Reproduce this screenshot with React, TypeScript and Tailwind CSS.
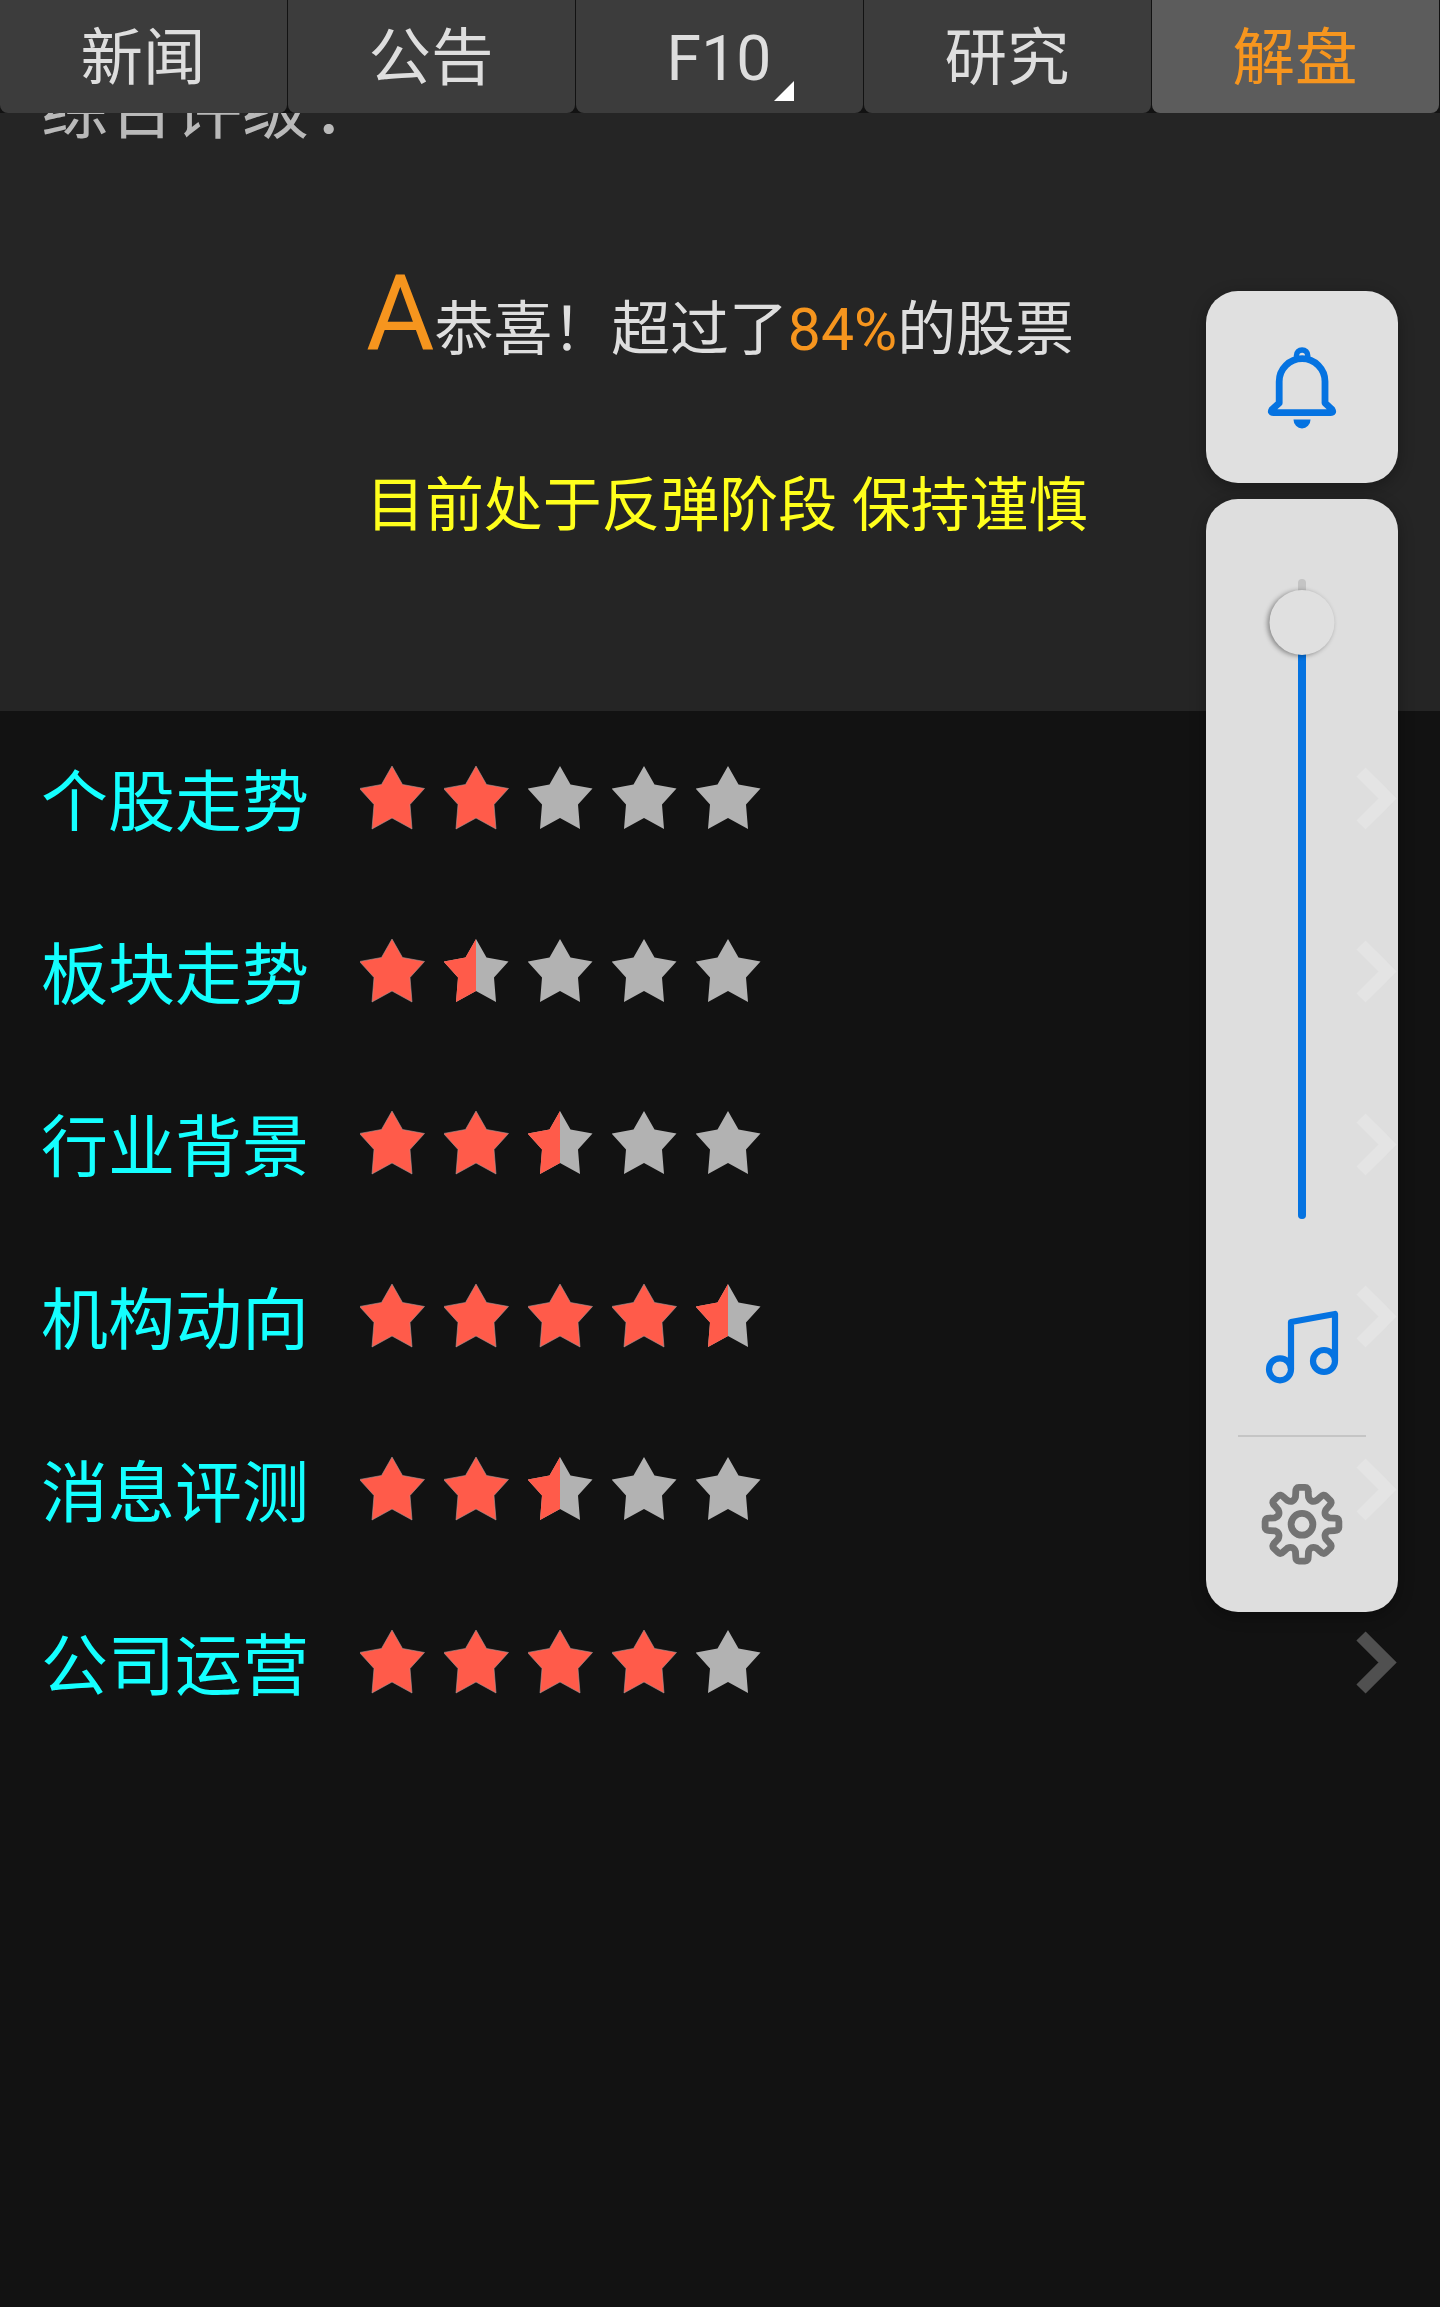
const tabs = ["新闻", "公告", "F10", "研究", "解盘"];

const ratings = [
  { name: "个股走势", score: 2 },
  { name: "板块走势", score: 1.5 },
  { name: "行业背景", score: 2.5 },
  { name: "机构动向", score: 4.5 },
  { name: "消息评测", score: 2.5 },
  { name: "公司运营", score: 4 },
];

const STAR = "32,0 42.500,18.500 64.500,22.500 50,38.500 52,63 32,52 12,63 14,38.500 -0.500,22.500 21.500,18.500";

function Star({ fill }: { fill: number }) {
  return (
    <svg width="65" height="65" viewBox="0 0 65 65" className="shrink-0">
      {fill < 1 && <polygon points={STAR} fill="#b2b2b2" />}
      {fill === 1 && <polygon points={STAR} fill="#ff5b4a" stroke="#aa9999" strokeWidth="0.6" />}
      {fill === 0.5 && <polygon points="32,0 32,52 12,63 14,38.500 -0.500,22.500 21.500,18.500" fill="#ff5b4a" />}
    </svg>
  );
}

function Chevron() {
  return (
    <svg width="42" height="65" viewBox="0 0 42 65" className="shrink-0">
      <path d="M5 6L31.500 32.500L5 59" fill="none" stroke="#505050" strokeWidth="13" />
    </svg>
  );
}

function Bell() {
  return (
    <svg width="104" height="104" viewBox="0 0 104 104" fill="none" stroke="#0573e1" strokeWidth="6.8" strokeLinejoin="round">
      <path d="M29.2 67V45.500a22.900 22.900 0 0 1 45.800 0V67L82 73.500Q84 76.700 80.500 76.700H23.500Q20 76.700 22 73.500Z" />
      <path d="M46.500 22V19.500a5.600 5.600 0 0 1 11.200 0V22" strokeWidth="5.500" />
      <path d="M43.500 83.500H60.500a8.500 9 0 0 1-17 0Z" fill="#0573e1" stroke="none" />
    </svg>
  );
}

function Music() {
  return (
    <svg width="104" height="110" viewBox="0 0 104 110" fill="none" stroke="#0573e1" strokeWidth="6.2" strokeLinejoin="round">
      <circle cx="30" cy="79.300" r="11" />
      <circle cx="74" cy="71" r="11" />
      <path d="M41 79.300V32L85 24V71" />
    </svg>
  );
}

const GEAR = (() => {
  const pts: string[] = [];
  for (let i = 0; i < 8; i++) {
    const base = (i * Math.PI) / 4 - Math.PI / 2;
    const at = (r: number, a: number) =>
      `${(52 + r * Math.cos(base + a)).toFixed(2)} ${(54.3 + r * Math.sin(base + a)).toFixed(2)}`;
    pts.push(`${i === 0 ? "M" : "L"}${at(28, -0.235)}`);
    pts.push(`L${at(33, -0.19)}Q${at(37.5, -0.17)} ${at(37, -0.08)}`);
    pts.push(`L${at(37, 0.08)}Q${at(37.5, 0.17)} ${at(33, 0.19)}`);
    pts.push(`L${at(28, 0.235)}Q${at(22.8, 0.3927)} ${at(28, 0.5504)}`);
  }
  return pts.join("") + "Z";
})();

function Gear() {
  return (
    <svg width="104" height="108" viewBox="0 0 104 108" fill="none" stroke="#737373" strokeWidth="6.8" strokeLinejoin="round">
      <path d={GEAR} />
      <circle cx="52" cy="54.300" r="10.900" />
    </svg>
  );
}

export default function App() {
  return (
    <main className="relative h-[2307px] w-[1440px] overflow-hidden bg-[#121212] font-[Roboto,'Noto_Sans_CJK_SC',sans-serif]">
      <nav className="relative z-10 grid h-[113px] grid-cols-5 bg-[#121212]">
        {tabs.map((tab, i) => (
          <button
            key={tab}
            className={`relative mr-px flex h-[113px] items-center justify-center rounded-b-lg pt-[5px] pr-px text-[62.500px] leading-none ${
              i === 4 ? "bg-[#5c5c5c] text-[#f6951e]" : "bg-[#3c3c3c] text-[#dedede]"
            }`}
          >
            <span>{tab}</span>
            {i === 2 && (
              <svg width="20" height="20" viewBox="0 0 20 20" className="absolute right-[69px] bottom-3">
                <path d="M20 0V20H0Z" fill="#fff" />
              </svg>
            )}
          </button>
        ))}
      </nav>

      <section className="h-[598px] overflow-hidden bg-[#252525]">
        <h2 className="-mt-[43px] pl-[41px] text-[67px] leading-[80px] text-[#b9b9b9]">
          综合评级<span className="ml-[3px]">：</span>
        </h2>
        <div className="ml-[366px] whitespace-nowrap">
          <p className="mt-[95px] h-[140px] text-[58.900px] leading-[140px] text-[#dedede]">
            <span className="text-[105px] text-[#f6951e]">A</span>恭喜！超过了<span className="text-[#f6951e]">84%</span>的股票
          </p>
          <p className="mt-[81px] text-[58.900px] leading-[80px] text-[#ffff1c]">目前处于反弹阶段 保持谨慎</p>
        </div>
      </section>

      <ul className="pt-px">
        {ratings.map((row) => (
          <li key={row.name} className="flex h-[172.800px] items-center pr-[42px] pl-[41px]">
            <span className="w-[319px] pt-[10px] text-[67px] leading-none text-[#14ffff]">{row.name}</span>
            <div className="flex gap-[19px]">
              {[0, 1, 2, 3, 4].map((n) => (
                <Star key={n} fill={Math.max(0, Math.min(1, row.score - n))} />
              ))}
            </div>
            <div className="ml-auto flex">
              <Chevron />
            </div>
          </li>
        ))}
      </ul>

      <aside className="absolute top-[291px] left-[1206px] z-20 flex w-[192px] flex-col gap-4">
        <div className="flex h-[192px] items-center justify-center rounded-[32px] bg-[#e0e0e0] pt-[2px] shadow-[0_4px_16px_rgba(0,0,0,0.3)]">
          <Bell />
        </div>
        <div className="relative flex h-[1113px] flex-col items-center overflow-hidden rounded-[32px] bg-[#dedede] pt-20 shadow-[0_4px_16px_rgba(0,0,0,0.3)]">
          <div className="relative flex h-[640px] w-2 flex-col rounded-full bg-[#c4c4c4]">
            <div className="mt-[42px] flex-1 rounded-full bg-[#0573e1]" />
            <div className="absolute top-[11px] left-1/2 size-[65px] -translate-x-1/2 rounded-full bg-[#e0e0e0] shadow-[-2px_1px_5px_rgba(0,0,0,0.4)]" />
          </div>
          <div className="mt-[71px] h-[110px]"><Music /></div>
          <div className="mt-[35px] h-[2px] w-32 bg-[#c5c5c5]" />
          <div className="mt-[33px]"><Gear /></div>
          <div className="absolute top-[267px] right-0 flex flex-col gap-[107.800px] opacity-60 brightness-[2.9]">
            <Chevron /><Chevron /><Chevron /><Chevron /><Chevron />
          </div>
        </div>
      </aside>
    </main>
  );
}
